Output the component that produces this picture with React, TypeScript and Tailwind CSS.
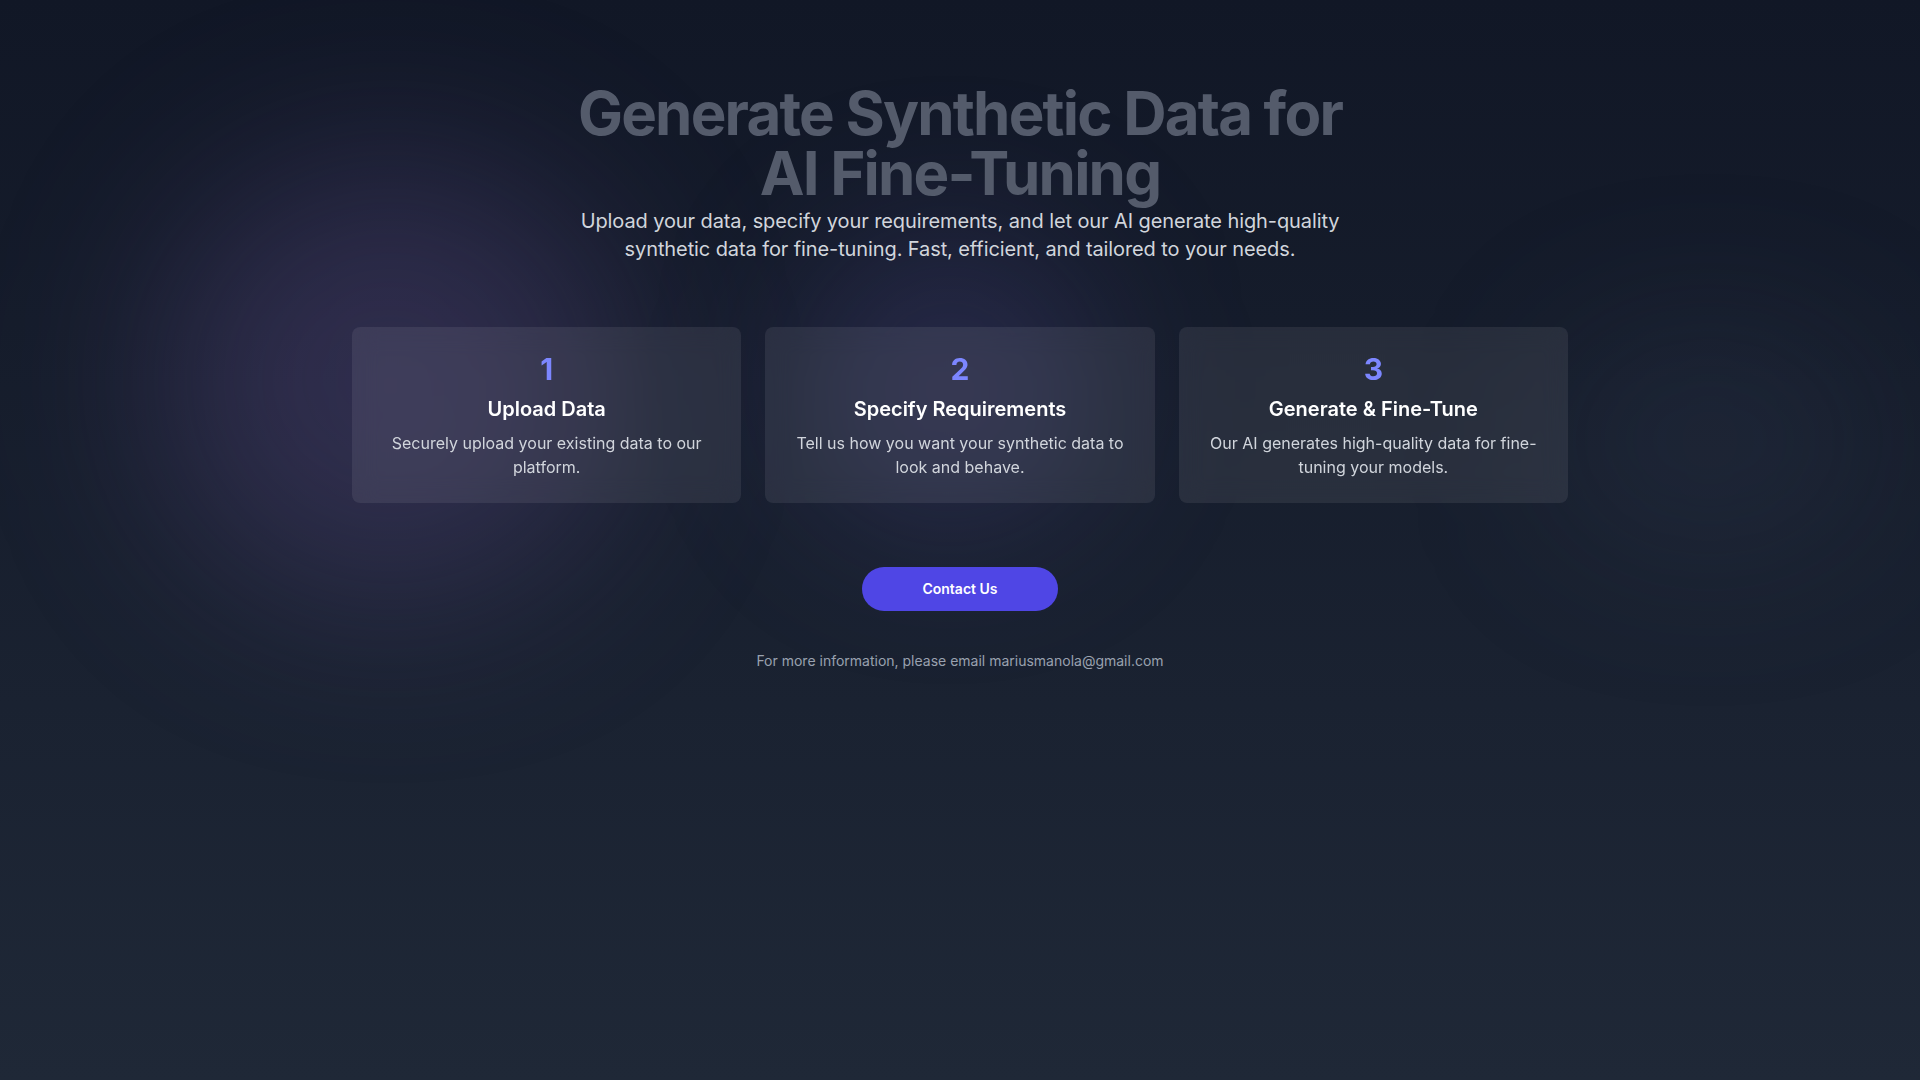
import React from "react";

const steps = [
  { n: "1", title: "Upload Data", desc: "Securely upload your existing data to our platform." },
  { n: "2", title: "Specify Requirements", desc: "Tell us how you want your synthetic data to look and behave." },
  { n: "3", title: "Generate & Fine-Tune", desc: "Our AI generates high-quality data for fine-tuning your models." },
];

export default function App() {
  return (
    <div
      className="relative min-h-screen w-full overflow-hidden bg-gradient-to-b from-[#111726] to-[#1f2837]"
      style={{ fontFamily: "Inter, 'Noto Sans', sans-serif" }}
    >
      <div className="pointer-events-none absolute left-[160px] top-[160px] h-[440px] w-[460px] rounded-full bg-[#7c5fb0]/25 blur-[90px]" />
      <div className="pointer-events-none absolute left-[800px] top-[230px] h-[300px] w-[300px] rounded-full bg-[#6d5fc0]/20 blur-[80px]" />
      <div className="pointer-events-none absolute left-[1550px] top-[330px] h-[220px] w-[320px] rounded-full bg-[#4b5570]/15 blur-[80px]" />

      <div className="relative mx-auto flex max-w-7xl flex-col items-center px-8 pt-[83px] text-center">
        <h1 className="max-w-[800px] text-[60px] font-bold leading-[60px] tracking-[-0.03em] text-[#545b6b]">
          Generate Synthetic Data for AI Fine-Tuning
        </h1>
        <p className="mt-[4px] max-w-[790px] text-xl leading-7 tracking-[-0.005em] text-gray-300">
          Upload your data, specify your requirements, and let our AI generate high-quality synthetic data for fine-tuning. Fast, efficient, and tailored to your needs.
        </p>

        <div className="mt-16 grid w-full grid-cols-3 gap-6">
          {steps.map((s) => (
            <div key={s.n} className="rounded-lg bg-white/[0.08] p-6 backdrop-blur-md">
              <div className="text-3xl font-bold leading-9 text-indigo-400">{s.n}</div>
              <h3 className="mt-2 text-xl font-semibold leading-7 text-white">{s.title}</h3>
              <p className="mt-2 text-base leading-6 text-gray-300">{s.desc}</p>
            </div>
          ))}
        </div>

        <button className="mt-16 rounded-full bg-[#4f46e5] px-[60px] py-3 text-sm font-semibold leading-5 text-white">
          Contact Us
        </button>

        <p className="mt-10 text-sm leading-5 text-gray-400">
          For more information, please email mariusmanola@gmail.com
        </p>
      </div>
    </div>
  );
}
